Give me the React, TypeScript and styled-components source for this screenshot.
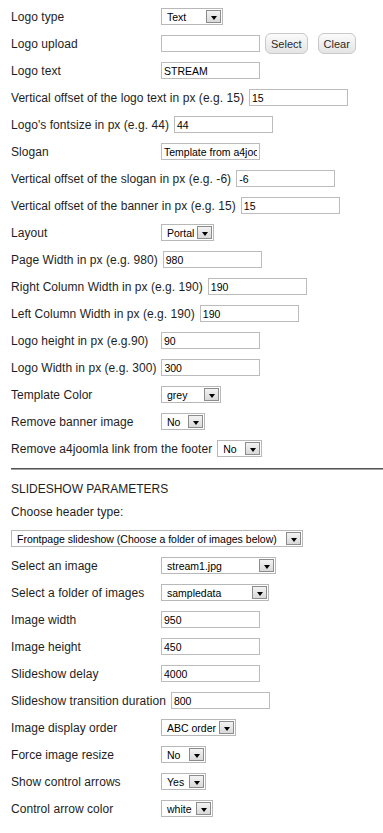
import React from "react";
import styled, { createGlobalStyle } from "styled-components";

const GlobalStyle = createGlobalStyle`
  html, body {
    margin: 0;
    padding: 0;
    background: #ffffff;
  }
  body {
    font-family: "Liberation Sans", Arial, sans-serif;
    font-size: 12px;
    color: #1e1e1e;
  }
`;

type Field =
  | { kind: "input"; label: string; value: string; upload?: boolean }
  | { kind: "select"; label: string; value: string; width: number };

const templateParams: Field[] = [
  { kind: "select", label: "Logo type", value: "Text", width: 62 },
  { kind: "input", label: "Logo upload", value: "", upload: true },
  { kind: "input", label: "Logo text", value: "STREAM" },
  { kind: "input", label: "Vertical offset of the logo text in px (e.g. 15)", value: "15" },
  { kind: "input", label: "Logo's fontsize in px (e.g. 44)", value: "44" },
  { kind: "input", label: "Slogan", value: "Template from a4joomla" },
  { kind: "input", label: "Vertical offset of the slogan in px (e.g. -6)", value: "-6" },
  { kind: "input", label: "Vertical offset of the banner in px (e.g. 15)", value: "15" },
  { kind: "select", label: "Layout", value: "Portal", width: 53 },
  { kind: "input", label: "Page Width in px (e.g. 980)", value: "980" },
  { kind: "input", label: "Right Column Width in px (e.g. 190)", value: "190" },
  { kind: "input", label: "Left Column Width in px (e.g. 190)", value: "190" },
  { kind: "input", label: "Logo height in px (e.g.90)", value: "90" },
  { kind: "input", label: "Logo Width in px (e.g. 300)", value: "300" },
  { kind: "select", label: "Template Color", value: "grey", width: 60 },
  { kind: "select", label: "Remove banner image", value: "No", width: 44 },
  { kind: "select", label: "Remove a4joomla link from the footer", value: "No", width: 45 },
];

const slideshowParams: Field[] = [
  { kind: "select", label: "Select an image", value: "stream1.jpg", width: 115 },
  { kind: "select", label: "Select a folder of images", value: "sampledata", width: 108 },
  { kind: "input", label: "Image width", value: "950" },
  { kind: "input", label: "Image height", value: "450" },
  { kind: "input", label: "Slideshow delay", value: "4000" },
  { kind: "input", label: "Slideshow transition duration", value: "800" },
  { kind: "select", label: "Image display order", value: "ABC order", width: 75 },
  { kind: "select", label: "Force image resize", value: "No", width: 45 },
  { kind: "select", label: "Show control arrows", value: "Yes", width: 45 },
  { kind: "select", label: "Control arrow color", value: "white", width: 52 },
];

export default function App() {
  return (
    <>
      <GlobalStyle />
      <Page>
        {templateParams.map((f) => (
          <ParamRow key={f.label} field={f} />
        ))}

        <Divider />
        <SectionTitle>SLIDESHOW PARAMETERS</SectionTitle>

        <Row $gap>
          <Label>Choose header type:</Label>
        </Row>
        <Row>
          <FakeSelect
            value="Frontpage slideshow (Choose a folder of images below)"
            width={292}
          />
        </Row>

        {slideshowParams.map((f) => (
          <ParamRow key={f.label} field={f} />
        ))}
      </Page>
    </>
  );
}

function ParamRow({ field }: { field: Field }) {
  return (
    <Row>
      <Label>{field.label}</Label>
      {field.kind === "select" ? (
        <FakeSelect value={field.value} width={field.width} />
      ) : (
        <>
          <TextInput type="text" defaultValue={field.value} />
          {field.upload && (
            <>
              <Button>Select</Button>
              <Button $second>Clear</Button>
            </>
          )}
        </>
      )}
    </Row>
  );
}

function FakeSelect({ value, width }: { value: string; width: number }) {
  return (
    <SelectBox style={{ width }}>
      <SelectValue>{value}</SelectValue>
      <ArrowBox>
        <Triangle />
      </ArrowBox>
    </SelectBox>
  );
}

const Page = styled.div`
  padding: 3px 0 24px 11px;
`;

const Row = styled.div<{ $gap?: boolean }>`
  display: flex;
  align-items: center;
  height: 27px;
  margin-top: ${(p) => (p.$gap ? "1px" : "0")};
`;

const Label = styled.span`
  min-width: 145px;
  margin-right: 5px;
  white-space: nowrap;
  font-size: 12px;
  line-height: 14px;
  letter-spacing: 0.05px;
`;

const TextInput = styled.input`
  box-sizing: border-box;
  width: 99px;
  height: 17px;
  margin: 0;
  padding: 1px 2px 0;
  border: 1px solid #bcbcbc;
  background: #ffffff;
  font-family: "Liberation Sans", Arial, sans-serif;
  font-size: 10.5px;
  color: #000000;
  outline: none;
`;

const Button = styled.button<{ $second?: boolean }>`
  box-sizing: border-box;
  height: 21px;
  margin: 0 0 0 ${(p) => (p.$second ? "10px" : "5px")};
  padding: 0 5px;
  border: 1px solid #c9c9c9;
  border-radius: 6px;
  background: linear-gradient(#fbfbfb, #e4e4e4);
  font-family: "Liberation Sans", Arial, sans-serif;
  font-size: 11px;
  color: #2a2a2a;
`;

const SelectBox = styled.div`
  box-sizing: border-box;
  display: flex;
  align-items: center;
  height: 17px;
  border: 1px solid #b8b8b8;
  background: #ffffff;
`;

const SelectValue = styled.span`
  flex: 1;
  padding-left: 5px;
  padding-top: 1px;
  overflow: hidden;
  white-space: nowrap;
  font-size: 10.5px;
  color: #000000;
`;

const ArrowBox = styled.span`
  box-sizing: border-box;
  display: flex;
  align-items: center;
  justify-content: center;
  width: 15px;
  height: 13px;
  margin-right: 1px;
  border: 1px solid #8c8c8c;
  background: linear-gradient(#f3f3f3, #d9d9d9);
`;

const Triangle = styled.span`
  width: 0;
  height: 0;
  margin-top: 2px;
  border-left: 3.5px solid transparent;
  border-right: 3.5px solid transparent;
  border-top: 4px solid #000000;
`;

const Divider = styled.div`
  margin-top: 6px;
  height: 1px;
  border-top: 1px solid #555555;
  background: #a0a0a0;
`;

const SectionTitle = styled.div`
  padding-top: 11px;
  height: 16px;
  line-height: 16px;
  font-size: 12px;
`;
